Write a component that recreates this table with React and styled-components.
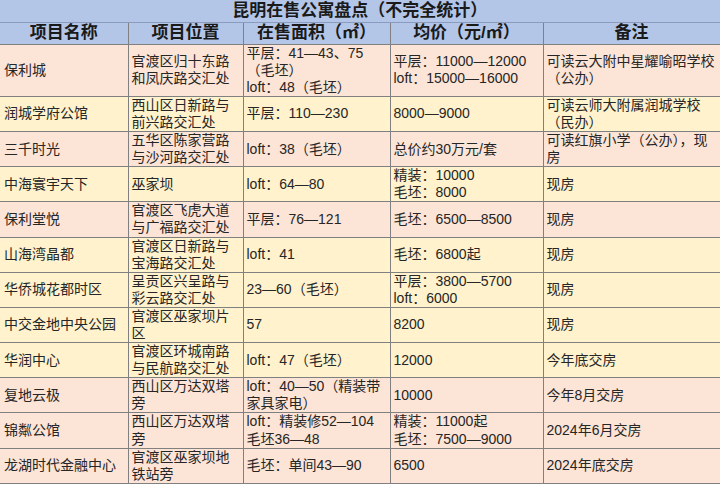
import styled, { createGlobalStyle } from "styled-components";

const GlobalStyle = createGlobalStyle`
  html, body {
    margin: 0;
    padding: 0;
    background: #ffffff;
  }
  body {
    font-family: "Liberation Sans", "Noto Sans CJK SC", sans-serif;
    color: #262626;
  }
`;

const COLORS = {
  blue: "#B4C6E7",
  pink: "#FCE4D6",
  yellow: "#FFF2CC",
  line: "#808080",
};

const rows = [
  {
    tone: "pink",
    cells: [
      ["保利城"],
      ["官渡区归十东路", "和凤庆路交汇处"],
      ["平层：41—43、75", "（毛坯）", "loft：48（毛坯）"],
      ["平层：11000—12000", "loft：15000—16000"],
      ["可读云大附中星耀喻昭学校", "（公办）"],
    ],
  },
  {
    tone: "yellow",
    cells: [
      ["润城学府公馆"],
      ["西山区日新路与", "前兴路交汇处"],
      ["平层：110—230"],
      ["8000—9000"],
      ["可读云师大附属润城学校", "（民办）"],
    ],
  },
  {
    tone: "pink",
    cells: [
      ["三千时光"],
      ["五华区陈家营路", "与沙河路交汇处"],
      ["loft：38（毛坯）"],
      ["总价约30万元/套"],
      ["可读红旗小学（公办），现", "房"],
    ],
  },
  {
    tone: "yellow",
    cells: [
      ["中海寰宇天下"],
      ["巫家坝"],
      ["loft：64—80"],
      ["精装：10000", "毛坯：8000"],
      ["现房"],
    ],
  },
  {
    tone: "pink",
    cells: [
      ["保利堂悦"],
      ["官渡区飞虎大道", "与广福路交汇处"],
      ["平层：76—121"],
      ["毛坯：6500—8500"],
      ["现房"],
    ],
  },
  {
    tone: "yellow",
    cells: [
      ["山海湾晶都"],
      ["官渡区日新路与", "宝海路交汇处"],
      ["loft：41"],
      ["毛坯：6800起"],
      ["现房"],
    ],
  },
  {
    tone: "yellow",
    cells: [
      ["华侨城花都时区"],
      ["呈贡区兴呈路与", "彩云路交汇处"],
      ["23—60（毛坯）"],
      ["平层：3800—5700", "loft：6000"],
      ["现房"],
    ],
  },
  {
    tone: "yellow",
    cells: [
      ["中交金地中央公园"],
      ["官渡区巫家坝片", "区"],
      ["57"],
      ["8200"],
      ["现房"],
    ],
  },
  {
    tone: "yellow",
    cells: [
      ["华润中心"],
      ["官渡区环城南路", "与民航路交汇处"],
      ["loft：47（毛坯）"],
      ["12000"],
      ["今年底交房"],
    ],
  },
  {
    tone: "pink",
    cells: [
      ["复地云极"],
      ["西山区万达双塔", "旁"],
      ["loft：40—50（精装带", "家具家电）"],
      ["10000"],
      ["今年8月交房"],
    ],
  },
  {
    tone: "pink",
    cells: [
      ["锦粼公馆"],
      ["西山区万达双塔", "旁"],
      ["loft：精装修52—104", "毛坯36—48"],
      ["精装：11000起", "毛坯：7500—9000"],
      ["2024年6月交房"],
    ],
  },
  {
    tone: "pink",
    cells: [
      ["龙湖时代金融中心"],
      ["官渡区巫家坝地", "铁站旁"],
      ["毛坯：单间43—90"],
      ["6500"],
      ["2024年底交房"],
    ],
  },
];

const columns = [
  { title: "项目名称", width: 128 },
  { title: "项目位置", width: 115 },
  { title: "在售面积（㎡）", width: 147 },
  { title: "均价（元/㎡）", width: 153 },
  { title: "备注", width: 177 },
];

const App = () => {
  return (
    <>
      <GlobalStyle />
      <Sheet>
        <colgroup>
          {columns.map((col) => (
            <col key={col.title} style={{ width: col.width }} />
          ))}
        </colgroup>
        <thead>
          <TitleRow>
            <TitleCell colSpan={5}>昆明在售公寓盘点（不完全统计）</TitleCell>
          </TitleRow>
          <HeadRow>
            {columns.map((col) => (
              <HeadCell key={col.title}>{col.title}</HeadCell>
            ))}
          </HeadRow>
        </thead>
        <tbody>
          {rows.map((row) => (
            <BodyRow key={row.cells[0][0]} $tone={row.tone}>
              {row.cells.map((lines, i) => (
                <Cell key={i}>
                  {lines.map((line, j) => (
                    <Line key={j}>{line}</Line>
                  ))}
                </Cell>
              ))}
            </BodyRow>
          ))}
        </tbody>
      </Sheet>
    </>
  );
};

export default App;

const Sheet = styled.table`
  width: 720px;
  table-layout: fixed;
  border-collapse: collapse;
  font-size: 14px;
`;

const TitleRow = styled.tr`
  height: 22px;
  background-color: ${COLORS.blue};
`;

const TitleCell = styled.th`
  padding: 0;
  height: 21px;
  font-size: 17px;
  font-weight: bold;
  line-height: 20px;
  text-align: center;
  color: #1a1a1a;
  border-bottom: 1px solid #8a9bbd;
  border-right: 1px solid ${COLORS.line};
`;

const HeadRow = styled.tr`
  background-color: ${COLORS.blue};
`;

const HeadCell = styled.th`
  padding: 0;
  height: 21px;
  font-size: 17px;
  font-weight: bold;
  line-height: 20px;
  text-align: center;
  color: #1a1a1a;
  border: 1px solid ${COLORS.line};
  border-top: none;
  &:first-child {
    border-left: none;
  }
`;

const BodyRow = styled.tr`
  background-color: ${({ $tone }) => COLORS[$tone]};
`;

const Cell = styled.td`
  padding: 0 3px;
  line-height: 17.1px;
  vertical-align: middle;
  border: 1px solid ${COLORS.line};
  overflow: hidden;
  &:first-child {
    padding-left: 4px;
    border-left: none;
  }
`;

const Line = styled.div`
  white-space: nowrap;
`;
